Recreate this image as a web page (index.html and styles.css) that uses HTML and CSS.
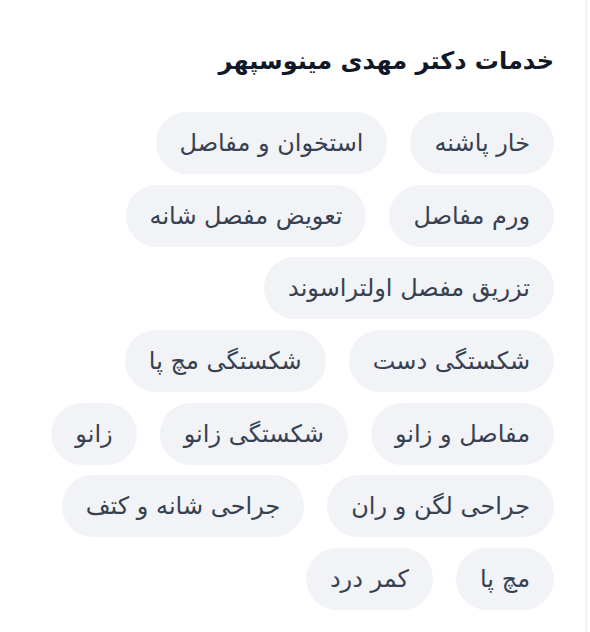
FILE: index.html
```html
<!DOCTYPE html>
<html lang="fa" dir="rtl">
<head>
<meta charset="utf-8">
<link rel="stylesheet" href="styles.css">
</head>
<body>
<div class="page">
  <div class="edge"></div>
  <section class="card">
    <h2 class="title">خدمات دکتر مهدی مینوسپهر</h2>
    <ul class="tags">
      <li class="tag">خار پاشنه</li>
      <li class="tag">استخوان و مفاصل</li>
      <li class="tag">ورم مفاصل</li>
      <li class="tag">تعویض مفصل شانه</li>
      <li class="tag">تزریق مفصل اولتراسوند</li>
      <li class="tag">شکستگی دست</li>
      <li class="tag">شکستگی مچ پا</li>
      <li class="tag">مفاصل و زانو</li>
      <li class="tag">شکستگی زانو</li>
      <li class="tag">زانو</li>
      <li class="tag">جراحی لگن و ران</li>
      <li class="tag">جراحی شانه و کتف</li>
      <li class="tag">مچ پا</li>
      <li class="tag">کمر درد</li>
    </ul>
  </section>
</div>
</body>
</html>
```

FILE: styles.css
```css
html, body {
  margin: 0;
  padding: 0;
  background: #ffffff;
}
body {
  font-family: "DejaVu Sans", "Noto Sans", sans-serif;
  width: 590px;
  height: 632px;
  overflow: hidden;
}
.page {
  display: flex;
  flex-direction: row;
  height: 632px;
  padding-right: 3px;
}
.edge {
  width: 2px;
  background: #eef0f3;
  border-radius: 2px 2px 0 0;
}
.card {
  flex: 1;
  padding: 0 31px 0 48px;
  box-sizing: border-box;
}
.title {
  margin: 44px 0 0 0;
  font-size: 24px;
  font-weight: 700;
  color: #111827;
  line-height: 34px;
}
.tags {
  list-style: none;
  margin: 0;
  padding: 0;
  margin-top: 34px;
  display: flex;
  flex-wrap: wrap;
  column-gap: 23px;
  row-gap: 10.7px;
}
.tag {
  background: #f1f3f7;
  color: #374151;
  font-size: 24px;
  line-height: 30px;
  padding: 16px 24px;
  border-radius: 31px;
}
```
